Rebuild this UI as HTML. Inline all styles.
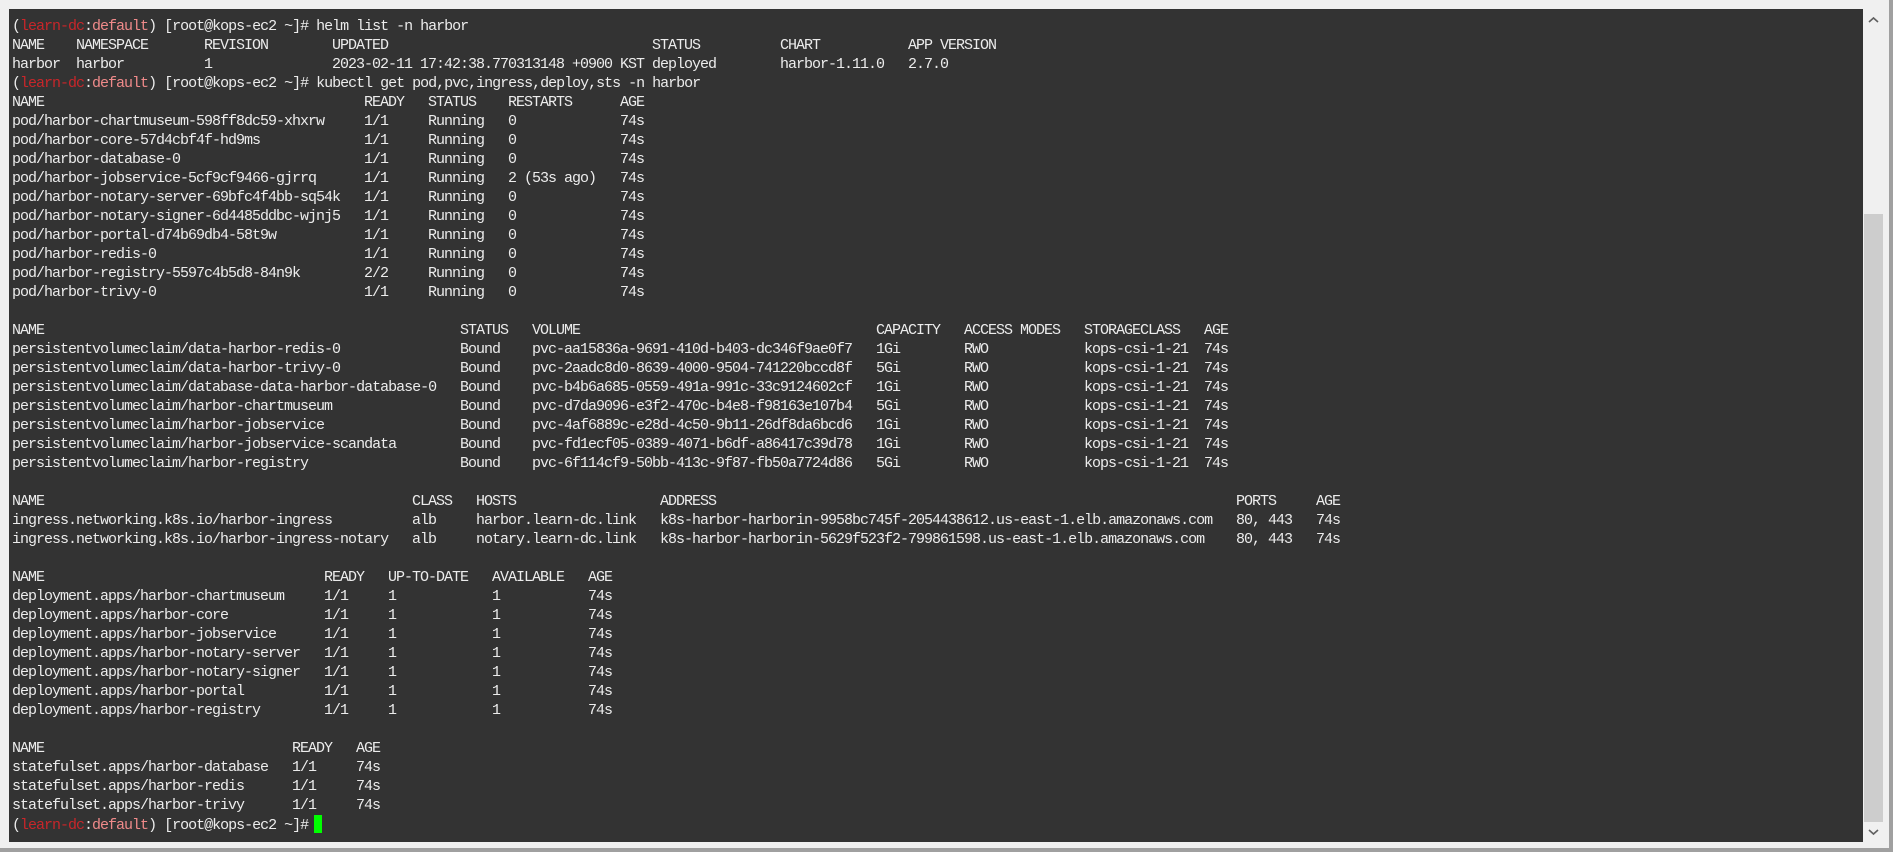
<!DOCTYPE html>
<html><head><meta charset="utf-8"><style>
html,body{margin:0;padding:0;width:1893px;height:852px;overflow:hidden;background:#f0f0f0}
#term{position:absolute;left:9px;top:9px;width:1854px;height:833px;background:#333333}
#txt{position:absolute;left:12px;top:17px;font-family:"Liberation Mono",monospace;font-size:15px;letter-spacing:-1px;line-height:19px;color:#ececec;white-space:normal}
.r{height:19px;white-space:pre}
.r span{display:inline-block;white-space:pre;overflow:visible}
.red{color:#c8262a}.pk{color:#ef8a8a}
.h span:nth-child(1){width:64px}.h span:nth-child(2){width:128px}.h span:nth-child(3){width:128px}.h span:nth-child(4){width:320px}.h span:nth-child(5){width:128px}.h span:nth-child(6){width:128px}
.p span:nth-child(1){width:352px}.p span:nth-child(2){width:64px}.p span:nth-child(3){width:80px}.p span:nth-child(4){width:112px}
.v span:nth-child(1){width:448px}.v span:nth-child(2){width:72px}.v span:nth-child(3){width:344px}.v span:nth-child(4){width:88px}.v span:nth-child(5){width:120px}.v span:nth-child(6){width:120px}
.i span:nth-child(1){width:400px}.i span:nth-child(2){width:64px}.i span:nth-child(3){width:184px}.i span:nth-child(4){width:576px}.i span:nth-child(5){width:80px}
.d span:nth-child(1){width:312px}.d span:nth-child(2){width:64px}.d span:nth-child(3){width:104px}.d span:nth-child(4){width:96px}
.s span:nth-child(1){width:280px}.s span:nth-child(2){width:64px}
.r span.red,.r span.pk{display:inline;width:auto}
#cur{display:inline-block;width:8px;height:18px;background:#00ff00;vertical-align:-4px;margin-left:6px}
#sb{position:absolute;left:1864px;top:9px;width:19px;height:833px;background:#f0f0f0}
#thumb{position:absolute;left:1864px;top:214px;width:19px;height:608px;background:#cdcdcd}
#rb{position:absolute;left:1889px;top:0;width:4px;height:852px;background:#a0a0a0}
#bb{position:absolute;left:0;top:848px;width:1893px;height:4px;background:#a0a0a0}
</style></head><body>
<div id="term"></div>
<div id="sb"></div><div id="thumb"></div>
<svg style="position:absolute;left:1867px;top:15px" width="13" height="10"><path d="M2 7 L6.5 3 L11 7" stroke="#606060" stroke-width="1.6" fill="none"/></svg>
<svg style="position:absolute;left:1867px;top:827px" width="13" height="10"><path d="M2 3 L6.5 7 L11 3" stroke="#606060" stroke-width="1.6" fill="none"/></svg>
<div id="rb"></div><div id="bb"></div>
<div id="txt">
<div class="r">(<span class="red">learn-dc</span>:<span class="pk">default</span>) [root@kops-ec2 ~]# helm list -n harbor</div>
<div class="r h"><span>NAME</span><span>NAMESPACE</span><span>REVISION</span><span>UPDATED</span><span>STATUS</span><span>CHART</span><span>APP VERSION</span></div>
<div class="r h"><span>harbor</span><span>harbor</span><span>1</span><span>2023-02-11 17:42:38.770313148 +0900 KST</span><span>deployed</span><span>harbor-1.11.0</span><span>2.7.0</span></div>
<div class="r">(<span class="red">learn-dc</span>:<span class="pk">default</span>) [root@kops-ec2 ~]# kubectl get pod,pvc,ingress,deploy,sts -n harbor</div>
<div class="r p"><span>NAME</span><span>READY</span><span>STATUS</span><span>RESTARTS</span><span>AGE</span></div>
<div class="r p"><span>pod/harbor-chartmuseum-598ff8dc59-xhxrw</span><span>1/1</span><span>Running</span><span>0</span><span>74s</span></div>
<div class="r p"><span>pod/harbor-core-57d4cbf4f-hd9ms</span><span>1/1</span><span>Running</span><span>0</span><span>74s</span></div>
<div class="r p"><span>pod/harbor-database-0</span><span>1/1</span><span>Running</span><span>0</span><span>74s</span></div>
<div class="r p"><span>pod/harbor-jobservice-5cf9cf9466-gjrrq</span><span>1/1</span><span>Running</span><span>2 (53s ago)</span><span>74s</span></div>
<div class="r p"><span>pod/harbor-notary-server-69bfc4f4bb-sq54k</span><span>1/1</span><span>Running</span><span>0</span><span>74s</span></div>
<div class="r p"><span>pod/harbor-notary-signer-6d4485ddbc-wjnj5</span><span>1/1</span><span>Running</span><span>0</span><span>74s</span></div>
<div class="r p"><span>pod/harbor-portal-d74b69db4-58t9w</span><span>1/1</span><span>Running</span><span>0</span><span>74s</span></div>
<div class="r p"><span>pod/harbor-redis-0</span><span>1/1</span><span>Running</span><span>0</span><span>74s</span></div>
<div class="r p"><span>pod/harbor-registry-5597c4b5d8-84n9k</span><span>2/2</span><span>Running</span><span>0</span><span>74s</span></div>
<div class="r p"><span>pod/harbor-trivy-0</span><span>1/1</span><span>Running</span><span>0</span><span>74s</span></div>
<div class="r"></div>
<div class="r v"><span>NAME</span><span>STATUS</span><span>VOLUME</span><span>CAPACITY</span><span>ACCESS MODES</span><span>STORAGECLASS</span><span>AGE</span></div>
<div class="r v"><span>persistentvolumeclaim/data-harbor-redis-0</span><span>Bound</span><span>pvc-aa15836a-9691-410d-b403-dc346f9ae0f7</span><span>1Gi</span><span>RWO</span><span>kops-csi-1-21</span><span>74s</span></div>
<div class="r v"><span>persistentvolumeclaim/data-harbor-trivy-0</span><span>Bound</span><span>pvc-2aadc8d0-8639-4000-9504-741220bccd8f</span><span>5Gi</span><span>RWO</span><span>kops-csi-1-21</span><span>74s</span></div>
<div class="r v"><span>persistentvolumeclaim/database-data-harbor-database-0</span><span>Bound</span><span>pvc-b4b6a685-0559-491a-991c-33c9124602cf</span><span>1Gi</span><span>RWO</span><span>kops-csi-1-21</span><span>74s</span></div>
<div class="r v"><span>persistentvolumeclaim/harbor-chartmuseum</span><span>Bound</span><span>pvc-d7da9096-e3f2-470c-b4e8-f98163e107b4</span><span>5Gi</span><span>RWO</span><span>kops-csi-1-21</span><span>74s</span></div>
<div class="r v"><span>persistentvolumeclaim/harbor-jobservice</span><span>Bound</span><span>pvc-4af6889c-e28d-4c50-9b11-26df8da6bcd6</span><span>1Gi</span><span>RWO</span><span>kops-csi-1-21</span><span>74s</span></div>
<div class="r v"><span>persistentvolumeclaim/harbor-jobservice-scandata</span><span>Bound</span><span>pvc-fd1ecf05-0389-4071-b6df-a86417c39d78</span><span>1Gi</span><span>RWO</span><span>kops-csi-1-21</span><span>74s</span></div>
<div class="r v"><span>persistentvolumeclaim/harbor-registry</span><span>Bound</span><span>pvc-6f114cf9-50bb-413c-9f87-fb50a7724d86</span><span>5Gi</span><span>RWO</span><span>kops-csi-1-21</span><span>74s</span></div>
<div class="r"></div>
<div class="r i"><span>NAME</span><span>CLASS</span><span>HOSTS</span><span>ADDRESS</span><span>PORTS</span><span>AGE</span></div>
<div class="r i"><span>ingress.networking.k8s.io/harbor-ingress</span><span>alb</span><span>harbor.learn-dc.link</span><span>k8s-harbor-harborin-9958bc745f-2054438612.us-east-1.elb.amazonaws.com</span><span>80, 443</span><span>74s</span></div>
<div class="r i"><span>ingress.networking.k8s.io/harbor-ingress-notary</span><span>alb</span><span>notary.learn-dc.link</span><span>k8s-harbor-harborin-5629f523f2-799861598.us-east-1.elb.amazonaws.com</span><span>80, 443</span><span>74s</span></div>
<div class="r"></div>
<div class="r d"><span>NAME</span><span>READY</span><span>UP-TO-DATE</span><span>AVAILABLE</span><span>AGE</span></div>
<div class="r d"><span>deployment.apps/harbor-chartmuseum</span><span>1/1</span><span>1</span><span>1</span><span>74s</span></div>
<div class="r d"><span>deployment.apps/harbor-core</span><span>1/1</span><span>1</span><span>1</span><span>74s</span></div>
<div class="r d"><span>deployment.apps/harbor-jobservice</span><span>1/1</span><span>1</span><span>1</span><span>74s</span></div>
<div class="r d"><span>deployment.apps/harbor-notary-server</span><span>1/1</span><span>1</span><span>1</span><span>74s</span></div>
<div class="r d"><span>deployment.apps/harbor-notary-signer</span><span>1/1</span><span>1</span><span>1</span><span>74s</span></div>
<div class="r d"><span>deployment.apps/harbor-portal</span><span>1/1</span><span>1</span><span>1</span><span>74s</span></div>
<div class="r d"><span>deployment.apps/harbor-registry</span><span>1/1</span><span>1</span><span>1</span><span>74s</span></div>
<div class="r"></div>
<div class="r s"><span>NAME</span><span>READY</span><span>AGE</span></div>
<div class="r s"><span>statefulset.apps/harbor-database</span><span>1/1</span><span>74s</span></div>
<div class="r s"><span>statefulset.apps/harbor-redis</span><span>1/1</span><span>74s</span></div>
<div class="r s"><span>statefulset.apps/harbor-trivy</span><span>1/1</span><span>74s</span></div>
<div class="r">(<span class="red">learn-dc</span>:<span class="pk">default</span>) [root@kops-ec2 ~]#<span id="cur"></span></div>
</div>
</body></html>
